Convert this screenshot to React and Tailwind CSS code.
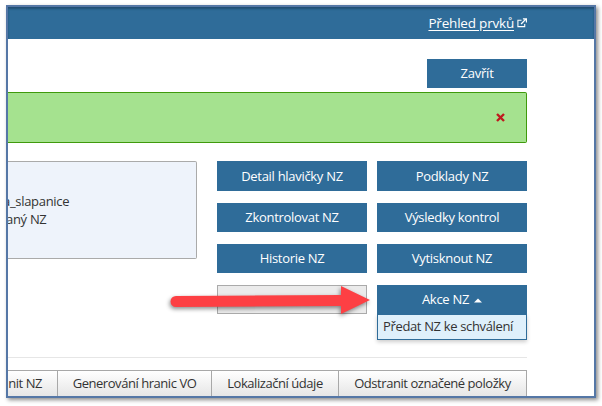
const font = { fontFamily: '"Open Sans", "Noto Sans", sans-serif' };

function Btn({ children }) {
  return (
    <div className="flex items-center justify-center bg-[#2f6c99] text-white text-[13px] tracking-[-0.3px] pt-px">
      {children}
    </div>
  );
}

function Tab({ w, children, last, first }) {
  return (
    <div
      className={`flex items-center shrink-0 h-full text-[13px] tracking-[-0.45px] text-[#333] pb-[4px] ${first ? "justify-end pr-[15px]" : "justify-center border-l border-[#a8a8a8]"} ${last ? "border-r" : ""}`}
      style={{ width: w }}
    >
      {children}
    </div>
  );
}

export default function App() {
  return (
    <div className="w-[602px] h-[406px] bg-white overflow-hidden relative" style={font}>
      <div className="ml-[6px] mt-[5px] w-[590px] h-[393px] border-2 border-[#5577a6] overflow-hidden flex flex-col shadow-[2px_2px_4px_rgba(0,0,0,0.45)]">
        <div className="h-[32px] shrink-0 bg-[#2f6c99] shadow-[inset_0_2px_2px_rgba(20,50,80,0.5)] flex items-center justify-end pr-[67px]">
          <span className="text-white text-[13.5px] tracking-[-0.2px] underline underline-offset-2">Přehled prvků</span>
          <svg width="10" height="10" viewBox="0 0 11 11" className="ml-[3px]" fill="none" stroke="#fff" strokeWidth="1.2">
            <path d="M8.5 6.5v3h-7.5v-7h4" />
            <path d="M4.5 6.5L9.5 1.5M6.5 1h4v4" strokeWidth="1.5" />
          </svg>
        </div>

        <div className="flex-1 flex flex-col pr-[67px] min-h-0">
          <div className="flex justify-end mt-[20px] shrink-0">
            <div className="w-[100px] h-[29px] flex items-center justify-center bg-[#2f6c99] text-white text-[13px] tracking-[-0.2px] pt-px">Zavřít</div>
          </div>

          <div className="mt-[4px] h-[51px] shrink-0 flex items-center justify-end pr-[21px] bg-[#a5e28f] border-y border-r border-[#3f9a0c] rounded-r-[2px]">
            <svg width="9" height="9" viewBox="0 0 9 9" fill="none" stroke="#bf1a1e" strokeWidth="2.4">
              <path d="M1 1L8 8M8 1L1 8" />
            </svg>
          </div>

          <div className="mt-[18px] flex shrink-0 h-[196px]">
            <div className="w-[189px] h-[98px] shrink-0 overflow-hidden bg-[#eef3fb] border-y border-r border-[#aaaaaa] rounded-r-[2px] pt-[30px] text-[13px] leading-[18px] tracking-[-0.3px] text-[#333]">
              <div className="-ml-[5px]">a_slapanice</div>
              <div className="-ml-[2px]">aný NZ</div>
            </div>
            <div className="ml-[20px] w-[310px]">
              <div className="grid grid-cols-[150px_150px] grid-rows-[30px_29px_29px_29px] gap-x-[10px] gap-y-[12px]">
                <Btn>Detail hlavičky NZ</Btn>
                <Btn>Podklady NZ</Btn>
                <Btn>Zkontrolovat NZ</Btn>
                <Btn>Výsledky kontrol</Btn>
                <Btn>Historie NZ</Btn>
                <Btn>Vytisknout NZ</Btn>
                <div className="bg-[#ebebeb] border border-[#aaaaaa]" />
                <Btn>
                  Akce NZ
                  <svg width="8" height="5" viewBox="0 0 8 5" className="ml-[5px]" fill="#fff">
                    <path d="M4 0.5L8 4.5H0Z" />
                  </svg>
                </Btn>
              </div>
              <div className="ml-[160px] w-[150px] h-[26px] bg-[#dff0fb] border border-[#2f6c99] flex items-center pl-[5px] text-[13px] tracking-[-0.35px] text-[#333] shadow-[0_2px_4px_rgba(0,0,0,0.2)]">
                Předat NZ ke schválení
              </div>
            </div>
          </div>

          <div className="h-px bg-[#e6e6e6] shrink-0" />

          <div className="mt-[12px] h-[30px] shrink-0 flex justify-end border-t border-[#a8a8a8] bg-gradient-to-b from-white to-[#e2e2e2]">
            <Tab w="50px" first>nit NZ</Tab>
            <Tab w="154px">Generování hranic VO</Tab>
            <Tab w="127px">Lokalizační údaje</Tab>
            <Tab w="189px" last>Odstranit označené položky</Tab>
          </div>
        </div>
      </div>

      <svg className="absolute left-[165px] top-[280px]" width="212" height="42" viewBox="165 280 212 42" style={{ filter: "drop-shadow(-1px 2px 2px rgba(0,0,0,0.45))" }}>
        <path d="M176 296L341 295V286L370 300L341 314V306L176 307A5.5 5.5 0 0 1 176 296Z" fill="#fd4044" />
      </svg>
    </div>
  );
}
